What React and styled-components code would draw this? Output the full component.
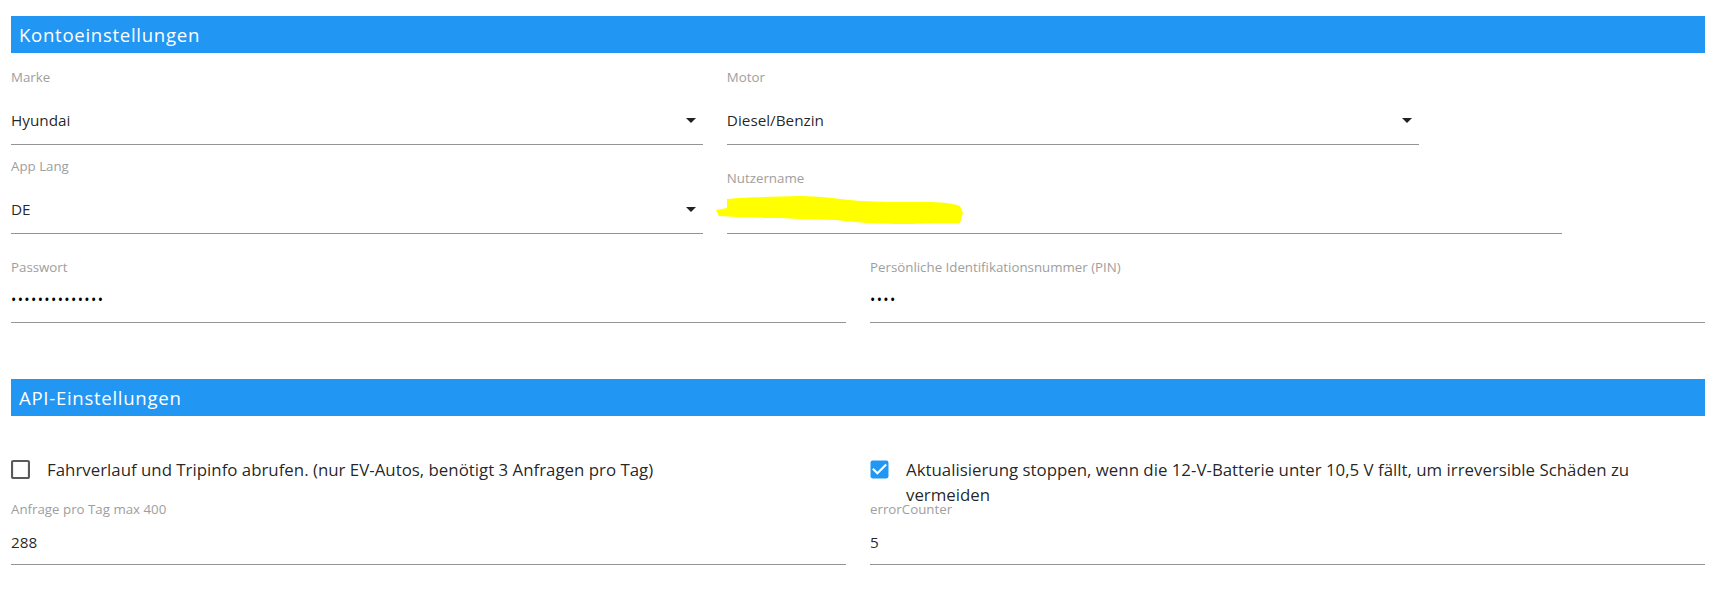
import React from 'react'
import styled, { createGlobalStyle } from 'styled-components'

const GlobalStyle = createGlobalStyle`
  html, body {
    margin: 0;
    padding: 0;
    background: #ffffff;
    overflow: hidden;
  }
  body {
    font-family: "Open Sans", "Noto Sans", sans-serif;
    color: rgba(0, 0, 0, 0.87);
  }
`

const Page = styled('div')`
  padding: 16px 9px 0 11px;
`

const SectionHeader = styled('div')`
  height: 37px;
  margin-top: ${props => props.$top || 0}px;
  padding-left: 8px;
  display: flex;
  align-items: center;
  background: #2196f3;
  color: #ffffff;
  font-size: 18.6px;
  letter-spacing: 0.7px;
`

const Grid = styled('div')`
  display: flex;
  flex-wrap: wrap;
  margin-right: -24px;
  margin-top: ${props => props.$top || 0}px;
`

const Item = styled('div')`
  box-sizing: border-box;
  width: ${props => (props.$cols / 12) * 100}%;
  padding-right: 24px;
  margin-top: ${props => (props.$flush ? 0 : 13)}px;
`

const Field = styled('div')`
  height: 76px;
  display: flex;
  flex-direction: column;
`

const Label = styled('div')`
  margin-top: ${props => (props.$select ? 0 : 12)}px;
  font-size: 13.3px;
  line-height: 16px;
  color: #9e9e9e;
  white-space: nowrap;
`

const InputBox = styled('div')`
  position: relative;
  margin-top: auto;
  height: 24px;
  padding-bottom: ${props => (props.$select ? 12 : 10)}px;
  border-bottom: 1px solid #949494;
  display: flex;
  align-items: center;
  justify-content: space-between;
  font-size: 15.3px;
  line-height: 24px;
`

const Dots = styled('span')`
  font-size: 14px;
  letter-spacing: 1.4px;
  color: #000000;
`

const Redaction = styled('svg')`
  position: absolute;
  left: -15px;
  top: -5px;
`

const CheckRow = styled('div')`
  height: 40px;
  display: flex;
  align-items: flex-start;
  padding-top: 8px;
  box-sizing: border-box;
`

const CheckIcon = styled('svg')`
  flex: none;
  margin-top: 3px;
  margin-right: 17px;
`

const CheckText = styled('span')`
  font-size: 16.85px;
  line-height: 25px;
  max-width: 775px;
`

const ArrowDown = () => (
  <svg width="24" height="24" viewBox="0 0 24 24">
    <path d="M7 10l5 5 5-5z" fill="#212121" />
  </svg>
)

const Checkbox = ({ checked }) => (
  <CheckIcon width="19" height="19" viewBox="3 3 18 18">
    {checked ? (
      <>
        <rect x="3.5" y="3.5" width="17" height="17" rx="2" fill="#2196f3" />
        <path d="M10 17l-5-5 1.41-1.41L10 14.17l7.59-7.59L19 8l-9 9z" fill="#ffffff" />
      </>
    ) : (
      <path
        d="M19 5v14H5V5h14m0-2H5c-1.1 0-2 .9-2 2v14c0 1.1.9 2 2 2h14c1.1 0 2-.9 2-2V5c0-1.1-.9-2-2-2z"
        fill="#5a5a5a"
      />
    )}
  </CheckIcon>
)

const SelectField = ({ label, value }) => (
  <Field>
    <Label $select>{label}</Label>
    <InputBox $select>
      <span>{value}</span>
      <ArrowDown />
    </InputBox>
  </Field>
)

const TextField = ({ label, children }) => (
  <Field>
    <Label>{label}</Label>
    <InputBox>{children}</InputBox>
  </Field>
)

const App = () => (
  <Page>
    <GlobalStyle />
    <SectionHeader>Kontoeinstellungen</SectionHeader>
    <Grid $top={3}>
      <Item $cols={5}>
        <SelectField label="Marke" value="Hyundai" />
      </Item>
      <Item $cols={5}>
        <SelectField label="Motor" value="Diesel/Benzin" />
      </Item>
    </Grid>
    <Grid>
      <Item $cols={5}>
        <SelectField label="App Lang" value="DE" />
      </Item>
      <Item $cols={6}>
        <TextField label="Nutzername">
          <span />
          <Redaction width="256" height="32" viewBox="712 194 256 32">
            <path
              d="M727 199 C745 197 767 197 800 196 C820 196 840 199 860 201 C880 202 900 202 917 202 C935 202 950 202 960 206 L963 213 L960 223 C945 223 935 223 933 223 C915 224 905 224 900 224 C885 224 875 223 867 223 C850 222 840 220 833 220 C815 219 805 219 800 219 C785 218 775 218 767 218 C750 217 745 217 737 217 L719 216 L716 210 L727 208 Z"
              fill="#ffff00"
            />
          </Redaction>
        </TextField>
      </Item>
    </Grid>
    <Grid>
      <Item $cols={6}>
        <TextField label="Passwort">
          <Dots>••••••••••••••</Dots>
        </TextField>
      </Item>
      <Item $cols={6}>
        <TextField label="Persönliche Identifikationsnummer (PIN)">
          <Dots>••••</Dots>
        </TextField>
      </Item>
    </Grid>

    <SectionHeader $top={56}>API-Einstellungen</SectionHeader>
    <Grid $top={33}>
      <Item $cols={6} $flush>
        <CheckRow>
          <Checkbox />
          <CheckText>Fahrverlauf und Tripinfo abrufen. (nur EV-Autos, benötigt 3 Anfragen pro Tag)</CheckText>
        </CheckRow>
      </Item>
      <Item $cols={6} $flush>
        <CheckRow>
          <Checkbox checked />
          <CheckText>
            Aktualisierung stoppen, wenn die 12-V-Batterie unter 10,5 V fällt, um irreversible Schäden zu vermeiden
          </CheckText>
        </CheckRow>
      </Item>
    </Grid>
    <Grid>
      <Item $cols={6} $flush>
        <TextField label="Anfrage pro Tag max 400">
          <span>288</span>
        </TextField>
      </Item>
      <Item $cols={6} $flush>
        <TextField label="errorCounter">
          <span>5</span>
        </TextField>
      </Item>
    </Grid>
  </Page>
)

export default App
